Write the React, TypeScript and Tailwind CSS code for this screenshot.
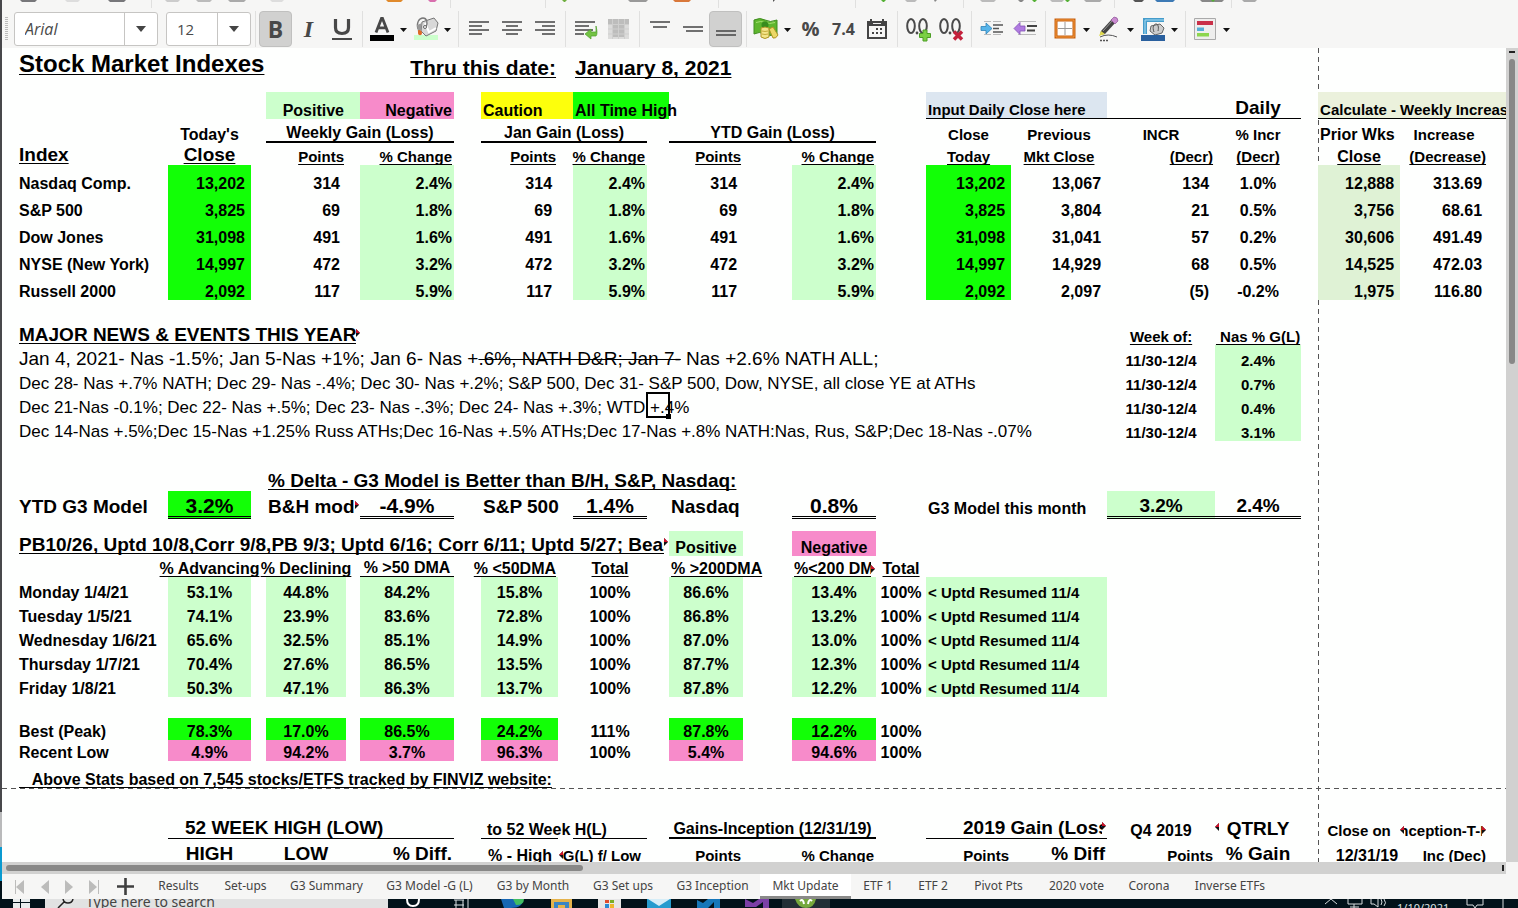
import React, { useState } from "react";
import type { ReactNode } from "react";

/* ---------- Sheet cells ---------- */

const SIZE = {
  15: "text-[15px] leading-[17px]",
  16: "text-[16px] leading-[16px]",
  17: "text-[17px] leading-[18px]",
  19: "text-[19px] leading-[20px]",
  21: "text-[21px] leading-[20px]",
  24: "text-[24px] leading-[28px]",
};

const ALIGN = {
  left: "justify-start pl-[2px]",
  center: "justify-center",
  right: "justify-end pr-[2px]",
  number: "justify-end pr-[6px]",
};

const FILL = {
  none: "",
  mint: "bg-[#ccffcc]",
  green: "bg-[#12ff06]",
  pink: "bg-[#f78bca]",
  yellow: "bg-[#fdff0c]",
  blue: "bg-[#dce6f0]",
  olive: "bg-[#ebf1dc]",
  sage: "bg-[#dff2d5]",
};

const LINE = {
  none: "",
  thin: "border-b border-black",
  thick: "border-b-2 border-black",
  double: "border-b-[3px] border-double border-black",
};

type CellProps = {
  span?: number;
  size?: keyof typeof SIZE;
  align?: keyof typeof ALIGN;
  fill?: keyof typeof FILL;
  line?: keyof typeof LINE;
  u?: boolean;
  plain?: boolean;
  inset?: string;
  children?: ReactNode;
};

function C({ span = 1, size = 16, align = "left", fill = "none", line = "none", u, plain, inset = "", children }: CellProps) {
  return (
    <td colSpan={span} className={`p-0 align-bottom ${FILL[fill]} ${LINE[line]}`}>
      <div className={`flex whitespace-pre ${SIZE[size]} ${ALIGN[align]} ${plain ? "font-normal" : "font-bold"} ${inset}`}>
        {typeof children === "string" && u ? <Under>{children}</Under> : children}
      </div>
    </td>
  );
}

function Under({ children }: { children: ReactNode }) {
  return (
    <span className="underline decoration-1 underline-offset-2 [text-decoration-skip-ink:none]">{children}</span>
  );
}

function Mark({ left }: { left?: boolean }) {
  return (
    <svg width="4" height="8" viewBox="0 0 4 8" className="mt-1 shrink-0" aria-hidden="true">
      <path d={left ? "M4 0v8L0 4z" : "M0 0v8l4-4z"} fill="#111" />
      <path d={left ? "M4 0v4H0z" : "M0 0v4h4z"} fill="#d0102a" />
    </svg>
  );
}

/** Text cut off at the right edge of its cell, with the overflow marker after it. */
function Clipped({ children }: { children: ReactNode }) {
  return (
    <div className="flex min-w-0 flex-1">
      <div className="-mb-[4px] min-w-0 overflow-hidden pb-[4px]">{children}</div>
      <Mark />
    </div>
  );
}

/** Index label column with the sheet's left margin. */
function Label({ children, span = 1, size = 16, u, plain }: CellProps) {
  return (
    <td colSpan={span} className="p-0 pl-[17px] align-bottom">
      <div className={`flex whitespace-pre ${SIZE[size]} ${plain ? "font-normal" : "font-bold"}`}>
        {u ? <Under>{children}</Under> : children}
      </div>
    </td>
  );
}

const COLS = [
  "w-[166px]", "w-[83px]", "w-[15px]", "w-[80px]", "w-[14px]", "w-[94px]", "w-[27px]", "w-[77px]",
  "w-[15px]", "w-[74px]", "w-[22px]", "w-[74px]", "w-[49px]", "w-[84px]", "w-[50px]", "w-[85px]",
  "w-[96px]", "w-[108px]", "w-[86px]", "w-[17px]", "w-[82px]", "w-[88px]", "w-[18px]",
];

const MARKET = [
  ["Nasdaq Comp.", "13,202", "314", "2.4%", "13,067", "134", "1.0%", "12,888", "313.69"],
  ["S&P 500", "3,825", "69", "1.8%", "3,804", "21", "0.5%", "3,756", "68.61"],
  ["Dow Jones", "31,098", "491", "1.6%", "31,041", "57", "0.2%", "30,606", "491.49"],
  ["NYSE (New York)", "14,997", "472", "3.2%", "14,929", "68", "0.5%", "14,525", "472.03"],
  ["Russell 2000", "2,092", "117", "5.9%", "2,097", "(5)", "-0.2%", "1,975", "116.80"],
];

const BREADTH = [
  ["Monday 1/4/21", "53.1%", "44.8%", "84.2%", "15.8%", "100%", "86.6%", "13.4%", "100%"],
  ["Tuesday 1/5/21", "74.1%", "23.9%", "83.6%", "72.8%", "100%", "86.8%", "13.2%", "100%"],
  ["Wednesday 1/6/21", "65.6%", "32.5%", "85.1%", "14.9%", "100%", "87.0%", "13.0%", "100%"],
  ["Thursday 1/7/21", "70.4%", "27.6%", "86.5%", "13.5%", "100%", "87.7%", "12.3%", "100%"],
  ["Friday 1/8/21", "50.3%", "47.1%", "86.3%", "13.7%", "100%", "87.8%", "12.2%", "100%"],
];

const EXTREMES = [
  ["Best (Peak)", "78.3%", "17.0%", "86.5%", "24.2%", "111%", "87.8%", "12.2%", "100%"],
  ["Recent Low", "4.9%", "94.2%", "3.7%", "96.3%", "100%", "5.4%", "94.6%", "100%"],
];

function BreadthCells({ row, fill }: { row: string[]; fill: keyof typeof FILL }) {
  return (
    <>
      <Label>{row[0]}</Label>
      <C align="center" fill={fill}>{row[1]}</C>
      <C />
      <C align="center" fill={fill}>{row[2]}</C>
      <C />
      <C align="center" fill={fill}>{row[3]}</C>
      <C />
      <C align="center" fill={fill}>{row[4]}</C>
      <C />
      <C align="center">{row[5]}</C>
      <C />
      <C align="center" fill={fill}>{row[6]}</C>
      <C />
      <C align="center" fill={fill}>{row[7]}</C>
      <C align="center">{row[8]}</C>
    </>
  );
}

function WeekCells({ value }: { value: string }) {
  return (
    <>
      <C size={15} align="center">11/30-12/4</C>
      <C size={15} align="center" fill="mint">{value}</C>
    </>
  );
}

function Sheet() {
  return (
    <div className="relative min-w-0 flex-1 overflow-hidden bg-[#fefffe]">
      {/* page breaks */}
      <div className="absolute inset-y-0 left-[1316px] w-px bg-[repeating-linear-gradient(to_bottom,#555_0_5px,transparent_5px_9px)]" />
      <div className="absolute inset-x-0 top-[740px] h-px bg-[repeating-linear-gradient(to_right,#555_0_5px,transparent_5px_9px)]" />
      <table className="relative w-[1504px] table-fixed border-separate border-spacing-0 font-['Liberation_Sans',Arial,sans-serif] text-black">
        <colgroup>
          {COLS.map((w, i) => <col key={i} className={w} />)}
        </colgroup>
        <tbody>
          <tr className="h-[30px]">
            <Label span={4} size={24} u>Stock Market Indexes</Label>
            <C span={4} size={21} align="right" u>Thru this date:</C>
            <C />
            <C span={6} size={21} u>January 8, 2021</C>
          </tr>
          <tr className="h-[14px]"><td className="p-0" /></tr>
          <tr className="h-[27px]">
            <C span={3} />
            <C align="right" fill="mint">Positive</C>
            <C fill="mint" />
            <C align="right" fill="pink">Negative</C>
            <C />
            <C span={2} fill="yellow">Caution</C>
            <C span={2} fill="green">All Time High</C>
            <C span={4} />
            <C span={2} size={15} fill="blue" line="thin">Input Daily Close here</C>
            <C line="thin" />
            <C size={19} align="center" line="thin">Daily</C>
            <C />
            <td colSpan={3} className="border-b border-black bg-[#ebf1dc] p-0 align-bottom">
              <div className="overflow-hidden whitespace-pre pl-[2px] text-[15px] leading-[17px] font-bold">Calculate - Weekly Increase</div>
            </td>
          </tr>
          <tr className="h-[24px]">
            <C />
            <C align="center">Today's</C>
            <C />
            <C span={3} align="center" line="thick">Weekly Gain (Loss)</C>
            <C />
            <C span={3} align="center" line="thick">Jan Gain (Loss)</C>
            <C />
            <C span={3} align="center" line="thick">YTD Gain (Loss)</C>
            <C />
            <C size={15} align="center">Close</C>
            <C size={15} align="center">Previous</C>
            <C size={15} align="center">INCR</C>
            <C size={15} align="center">% Incr</C>
            <C />
            <C>Prior Wks</C>
            <C size={15} align="center">Increase</C>
          </tr>
          <tr className="h-[22px]">
            <Label size={19} u>Index</Label>
            <C size={19} align="center" u>Close</C>
            <C />
            <C size={15} align="right" u>Points</C>
            <C />
            <C size={15} align="right" u>% Change</C>
            <C />
            <C size={15} align="right" u>Points</C>
            <C />
            <C size={15} align="right" u>% Change</C>
            <C />
            <C size={15} align="right" u>Points</C>
            <C />
            <C size={15} align="right" u>% Change</C>
            <C />
            <C size={15} align="center" u>Today</C>
            <C size={15} align="center" u>Mkt Close</C>
            <C size={15} align="right" u>(Decr)</C>
            <C size={15} align="center" u>(Decr)</C>
            <C />
            <C align="center" u>Close</C>
            <C size={15} align="right" u>(Decrease)</C>
          </tr>
          {MARKET.map((r) => (
            <tr key={r[0]} className="h-[27px]">
              <Label>{r[0]}</Label>
              <C align="number" fill="green">{r[1]}</C>
              <C />
              <C align="number">{r[2]}</C>
              <C />
              <C align="right" fill="mint">{r[3]}</C>
              <C />
              <C align="number">{r[2]}</C>
              <C />
              <C align="right" fill="mint">{r[3]}</C>
              <C />
              <C align="number">{r[2]}</C>
              <C />
              <C align="right" fill="mint">{r[3]}</C>
              <C />
              <C align="number" fill="green">{r[1]}</C>
              <C align="number">{r[4]}</C>
              <C align="number">{r[5]}</C>
              <C align="center">{r[6]}</C>
              <C />
              <C align="number" fill="sage">{r[7]}</C>
              <C align="number">{r[8]}</C>
            </tr>
          ))}
          <tr className="h-[22px]"><td className="p-0" /></tr>
          <tr className="h-[23px]">
            <td colSpan={5} className="p-0 pl-[17px] align-bottom">
              <div className="flex w-[341px] text-[19px] leading-[20px] font-bold whitespace-pre">
                <Clipped><Under>MAJOR NEWS &amp; EVENTS THIS YEAR</Under></Clipped>
              </div>
            </td>
            <C span={12} />
            <C size={15} align="center" u>Week of:</C>
            <C size={15} align="center" u>{" Nas % G(L)"}</C>
          </tr>
          <tr className="h-[24px]">
            <Label span={17} size={19} plain>
              Jan 4, 2021- Nas -1.5%; Jan 5-Nas +1%; Jan 6- Nas +<s className="decoration-1">.6%, NATH D&amp;R; Jan 7-</s> Nas +2.6% NATH ALL;
            </Label>
            <WeekCells value="2.4%" />
          </tr>
          <tr className="h-[24px]">
            <Label span={17} size={17} plain>
              Dec 28- Nas +.7% NATH; Dec 29- Nas -.4%; Dec 30- Nas +.2%; S&amp;P 500, Dec 31- S&amp;P 500, Dow, NYSE, all close YE at ATHs
            </Label>
            <WeekCells value="0.7%" />
          </tr>
          <tr className="h-[24px]">
            <Label span={10} size={17} plain>
              Dec 21-Nas -0.1%; Dec 22- Nas +.5%; Dec 23- Nas -.3%; Dec 24- Nas +.3%; WTD +.4%
            </Label>
            <td className="relative p-0">
              <div className="absolute -inset-px border-2 border-black" />
              <div className="absolute -right-[2px] -bottom-[2px] size-[5px] bg-black" />
            </td>
            <C span={6} />
            <WeekCells value="0.4%" />
          </tr>
          <tr className="h-[24px]">
            <Label span={17} size={17} plain>
              Dec 14-Nas +.5%;Dec 15-Nas +1.25% Russ ATHs;Dec 16-Nas +.5% ATHs;Dec 17-Nas +.8% NATH:Nas, Rus, S&amp;P;Dec 18-Nas -.07%
            </Label>
            <WeekCells value="3.1%" />
          </tr>
          <tr className="h-[27px]"><td className="p-0" /></tr>
          <tr className="h-[23px]">
            <C span={3} />
            <C span={11} size={19} u>% Delta - G3 Model is Better than B/H, S&amp;P, Nasdaq:</C>
          </tr>
          <tr className="h-[28px]">
            <Label size={19}><span className="pb-[2px]">YTD G3 Model</span></Label>
            <C size={21} align="center" fill="green" line="double">3.2%</C>
            <C />
            <C span={2} size={19} inset="pb-[2px] pr-[1px]"><Clipped>B&amp;H model</Clipped></C>
            <C size={21} align="center" line="double">-4.9%</C>
            <C />
            <C span={2} size={19} inset="pb-[2px]">S&amp;P 500</C>
            <C size={21} align="center" line="double">1.4%</C>
            <C />
            <C size={19} inset="pb-[2px]">Nasdaq</C>
            <C />
            <C size={21} align="center" line="double">0.8%</C>
            <C />
            <C span={2} inset="pb-[2px]">G3 Model this month</C>
            <C size={19} align="center" fill="mint" line="double">3.2%</C>
            <C size={19} align="center" line="double">2.4%</C>
          </tr>
          <tr className="h-[12px]"><td className="p-0" /></tr>
          <tr className="h-[25px]">
            <td colSpan={11} className="p-0 pr-[1px] pl-[17px] align-bottom">
              <div className="flex text-[19px] leading-[22px] font-bold whitespace-pre">
                <Clipped><Under>PB10/26, Uptd 10/8,Corr 9/8,PB 9/3; Uptd 6/16; Corr 6/11; Uptd 5/27; Bear</Under></Clipped>
              </div>
            </td>
            <C align="center" fill="mint">Positive</C>
            <C />
            <C align="center" fill="pink">Negative</C>
          </tr>
          <tr className="h-[21px]">
            <C />
            <C align="center" u>% Advancing</C>
            <C />
            <C align="center" u>% Declining</C>
            <C />
            <C align="center" line="thin">{"% >50 DMA"}</C>
            <C />
            <C align="right" u>{"% <50DMA"}</C>
            <C />
            <C align="center" u>Total</C>
            <C />
            <C span={2} u>{"% >200DMA"}</C>
            <C inset="pr-[1px]"><Clipped><Under>{"%<200 DMA"}</Under></Clipped></C>
            <C align="center" u>Total</C>
          </tr>
          {BREADTH.map((r) => (
            <tr key={r[0]} className="h-[24px]">
              <BreadthCells row={r} fill="mint" />
              <C span={2} size={15} fill="mint">{"< Uptd Resumed 11/4"}</C>
            </tr>
          ))}
          <tr className="h-[21px]"><td className="p-0" /></tr>
          <tr className="h-[22px]"><BreadthCells row={EXTREMES[0]} fill="green" /></tr>
          <tr className="h-[21px]"><BreadthCells row={EXTREMES[1]} fill="pink" /></tr>
          <tr className="h-[27px]">
            <Label span={10} u>{"   Above Stats based on 7,545 stocks/ETFS tracked by FINVIZ website:"}</Label>
          </tr>
          <tr className="h-[26px]"><td className="p-0" /></tr>
          <tr className="h-[25px]">
            <C />
            <C span={5} size={19} line="thin" inset="pl-[17px]">52 WEEK HIGH (LOW)</C>
            <C />
            <C line="thin" inset="pl-[6px]">to 52 Week H(L)</C>
            <C />
            <C line="thin" />
            <C />
            <C span={3} align="center" line="thick">Gains-Inception (12/31/19)</C>
            <C />
            <C span={2} size={19} line="thin" inset="pl-[37px] pr-[1px]"><Clipped>2019 Gain (Loss)</Clipped></C>
            <C align="center">Q4 2019</C>
            <C size={19} align="center"><Mark left /><span className="flex-1 pr-[4px] text-center">QTRLY</span></C>
            <C />
            <C size={15} align="center">Close on</C>
            <C size={15} align="right">
              <Mark left />
              <div className="flex min-w-0 flex-1 justify-center overflow-hidden">Inception-T-D</div>
              <Mark />
            </C>
          </tr>
          <tr className="h-[25px]">
            <C />
            <C size={19} align="center">HIGH</C>
            <C />
            <C size={19} align="center">LOW</C>
            <C />
            <C size={19} align="right">% Diff.</C>
            <C />
            <C align="number">% - High</C>
            <C span={2} size={15} align="number"><Mark left />G(L) f/ Low</C>
            <C />
            <C size={15} align="right">Points</C>
            <C />
            <C size={15} align="right">% Change</C>
            <C />
            <C size={15} align="right">Points</C>
            <C size={19} align="right">% Diff</C>
            <C size={15} align="right">Points</C>
            <C size={19} align="center">% Gain</C>
            <C />
            <C align="right">12/31/19</C>
            <C size={15} align="right">Inc (Dec)</C>
          </tr>
        </tbody>
      </table>
    </div>
  );
}

/* ---------- Toolbar ---------- */

function Tool({ label, pressed, narrow, children }: { label: string; pressed?: boolean; narrow?: boolean; children: ReactNode }) {
  return (
    <button
      type="button"
      aria-label={label}
      aria-pressed={pressed}
      className={`flex h-[36px] shrink-0 items-center justify-center rounded-[4px] ${narrow ? "w-[31px]" : "w-[33px]"} ${pressed ? "border border-[#c0c0bf] bg-[#d1d1d0]" : ""}`}
    >
      {children}
    </button>
  );
}

function Arrow({ label }: { label: string }) {
  return (
    <button type="button" aria-label={label} className="flex h-[36px] w-[13px] shrink-0 items-center justify-center pt-[2px]">
      <svg width="7" height="4" viewBox="0 0 7 4" aria-hidden="true"><path d="M0 0h7L3.500 4z" fill="#111" /></svg>
    </button>
  );
}

function Sep() {
  return <div className="flex w-[8px] shrink-0 justify-center"><div className="h-[36px] w-px bg-[#e0e0df]" /></div>;
}

function Icon({ children }: { children: ReactNode }) {
  return <svg width="26" height="26" viewBox="0 0 26 26" fill="none" aria-hidden="true">{children}</svg>;
}

function Lines({ d }: { d: string }) {
  return <Icon><path d={d} stroke="#444" strokeWidth="1.700" /></Icon>;
}

const GLYPH = "font-['Open_Sans','Noto_Sans',sans-serif] font-bold text-[#484848]";

function Combo({ label, value, italic, wide }: { label: string; value: string; italic?: boolean; wide?: boolean }) {
  const [text, setText] = useState(value);
  return (
    <div className={`flex h-[34px] shrink-0 rounded-[3px] border border-[#c6c5c3] bg-white ${wide ? "w-[144px]" : "w-[85px]"}`}>
      <input
        aria-label={label}
        value={text}
        onChange={(e) => setText(e.target.value)}
        className={`min-w-0 flex-1 px-[10px] font-['Open_Sans','Noto_Sans',sans-serif] text-[#4a4a4a] outline-none ${italic ? "text-[16px] italic" : "text-[15px]"}`}
      />
      <button type="button" aria-label={`${label} list`} className="flex w-[33px] items-center justify-center border-l border-[#c6c5c3]">
        <svg width="10" height="6" viewBox="0 0 10 6" aria-hidden="true"><path d="M0 0h10L5 6z" fill="#444" /></svg>
      </button>
    </div>
  );
}

function UpperToolbarEdge() {
  const bits: [number, number, string][] = [
    [20, 17, "#77777a"], [65, 15, "#ddd"], [108, 18, "#77777a"], [165, 15, "#ccc"], [196, 16, "#bbb"], [228, 18, "#aaa"],
    [270, 14, "#ddd"], [386, 17, "#e08a2c"], [428, 9, "#d86fae"], [562, 5, "#6fae3f"], [628, 20, "#999"],
    [673, 18, "#d9783a"], [773, 2, "#555"], [881, 5, "#54b035"], [905, 12, "#bbb"], [934, 3, "#888"], [980, 16, "#bbb"],
    [1018, 6, "#888"], [1032, 5, "#54b035"], [1050, 14, "#bbb"], [1065, 5, "#54b035"], [1084, 18, "#aaa"],
    [1133, 11, "#555"], [1155, 20, "#3d7ab5"], [1200, 24, "#888"], [1211, 4, "#54b035"], [1242, 15, "#aaa"],
  ];
  return (
    <svg width="100%" height="10" aria-hidden="true" className="block">
      {bits.map(([x, w, c]) => <path key={x} d={`M${x - 2} 0h${w}l-2 2h-${Math.max(w - 4, 0)}z`} fill={c} />)}
      {[149, 448, 543, 716, 853, 961, 1112, 1229].map((x) => <path key={x} d={`M${x + 0.5} 0v8`} stroke="#e0e0df" />)}
    </svg>
  );
}

function Toolbar() {
  return (
    <header className="h-[48px] shrink-0 overflow-hidden bg-[#f6f6f5]">
      <UpperToolbarEdge />
      <div className="flex h-[38px] items-center">
        <div className="mr-[6px] ml-[3px] h-[24px] w-[3px] bg-[repeating-linear-gradient(to_bottom,#bbb_0_1px,transparent_1px_2px)]" />
        <Combo label="Font name" value="Arial" italic wide />
        <div className="w-[8px]" />
        <Combo label="Font size" value="12" />
        <Sep />
        <Tool label="Bold" pressed>
          <span className={`${GLYPH} text-[23px] leading-none`}>B</span>
        </Tool>
        <Tool label="Italic"><span className="font-['Liberation_Serif',serif] text-[24px] leading-none font-bold text-[#484848] italic">I</span></Tool>
        <Tool label="Underline">
          <Icon>
            <path d="M6.500 3v8.500q0 6 6.500 6t6.500-6V3" stroke="#484848" strokeWidth="3.200" />
            <path d="M3 23h20" stroke="#484848" strokeWidth="2" />
          </Icon>
        </Tool>
        <Sep />
        <Tool label="Font color" narrow>
          <Icon>
            <path d="M7 16.500 12.500 2.500h1L19 16.500M9 11.800h8" stroke="#484848" strokeWidth="2.800" />
            <path d="M1 19h24v6H1z" fill="#000" />
          </Icon>
        </Tool>
        <Arrow label="Font color list" />
        <Tool label="Highlighting" narrow>
          <Icon>
            <path d="M1 19h24v5H1z" fill="#ccffcc" />
            <path d="m9 6 12-4 4 5-2 8-10 5-5-5z" fill="#d8d8d8" stroke="#777" />
            <path d="m12 7 4 9 7-4" stroke="#fff" strokeWidth="2" />
            <path d="M5 13C3 7 6 2 10 2s5 5 3 9" stroke="#777" strokeWidth="1.300" />
            <circle cx="12" cy="11" r="1.500" fill="#fff" stroke="#666" />
            <path d="M4 9 9 7l-1 7-3 2z" fill="#999" />
            <path d="M5 15c0-2 4-1 4 2s-4 3-4 0z" fill="#dd6a25" />
          </Icon>
        </Tool>
        <Arrow label="Highlighting list" />
        <Sep />
        <Tool label="Align left"><Lines d="M3 6h20M3 10h13M3 14h20M3 18h13" /></Tool>
        <Tool label="Align center"><Lines d="M3 6h20M7 10h12M3 14h20M7 18h12" /></Tool>
        <Tool label="Align right"><Lines d="M3 6h20M10 10h13M3 14h20M10 18h13" /></Tool>
        <Sep />
        <Tool label="Wrap text">
          <Icon>
            <path d="M2 6h20M2 10h14M2 14h18M2 18h9" stroke="#444" strokeWidth="1.700" />
            <path d="M23 10v6h-5v-3l-6 5 6 5v-3h5q2-2 0-10z" fill="#73c344" stroke="#4f9f2d" strokeWidth=".7" />
          </Icon>
        </Tool>
        <Tool label="Merge cells">
          <Icon>
            <path d="M2 3h21v20H2z" fill="#dcdcdb" />
            <path d="M2 3h21v5H2zM6 8h12v13H6z" fill="#bdbdbc" />
            <path d="M2 8.500h21M2 13h21M2 18h21M6.500 3v20M12.500 3v20M18.500 3v20" stroke="#cfcfce" />
          </Icon>
        </Tool>
        <Sep />
        <Tool label="Align top"><Lines d="M3 6h20M6 11h14" /></Tool>
        <Tool label="Center vertically"><Lines d="M3 11h20M6 15h17" /></Tool>
        <Tool label="Align bottom" pressed><Lines d="M3 19h20M3 15h20" /></Tool>
        <Sep />
        <Tool label="Format as currency" narrow>
          <Icon>
            <path d="M1 4q6-3 11 0t12 0v14q-6 3-12 0t-11 0z" fill="#5eb62d" stroke="#3f8d1f" />
            <path d="M3 6.500q5-2 9 0t10 0" stroke="#a4e070" />
            <circle cx="12" cy="9" r="3.500" fill="#378c1e" />
            <path d="M8 12q4-2 8 0v9q-4 3-8 0z" fill="#f3e58a" stroke="#ad9426" />
            <path d="m16 13 4-2 5 8q-2 4-5 3z" fill="#ecd867" stroke="#ad9426" />
            <path d="M9 15q3 1 6 0M9 18q3 1 6 0" stroke="#c6ac3d" />
          </Icon>
        </Tool>
        <Arrow label="Currency list" />
        <Tool label="Format as percent"><span className={`${GLYPH} text-[20px] leading-none`}>%</span></Tool>
        <Tool label="Format as number"><span className={`${GLYPH} text-[16px] leading-none`}>7.4</span></Tool>
        <Tool label="Format as date">
          <Icon>
            <path d="M4 6h18v16H4z" stroke="#444" strokeWidth="2" />
            <path d="M3 5h20v5H3z" fill="#444" />
            <path d="M7 3v4M19 3v4" stroke="#444" strokeWidth="2" />
            <path d="M9 7.500h8" stroke="#eee" />
            <path d="M12 13h2m2 0h2M8 17h2m2 0h2m2 0h2" stroke="#444" strokeWidth="2" />
          </Icon>
        </Tool>
        <Sep />
        <Tool label="Add decimal place">
          <Icon>
            <ellipse cx="6" cy="10" rx="3.800" ry="7" stroke="#4a4a4a" strokeWidth="2" />
            <ellipse cx="18" cy="10" rx="3.800" ry="7" stroke="#4a4a4a" strokeWidth="2" />
            <circle cx="12" cy="17" r="1.400" fill="#4a4a4a" />
            <path d="M18 14h4v3.500h3.500v4H22V25h-4v-3.500h-3.500v-4H18z" fill="#7bd044" stroke="#4c9e25" />
          </Icon>
        </Tool>
        <Tool label="Delete decimal place">
          <Icon>
            <ellipse cx="6" cy="10" rx="3.800" ry="7" stroke="#4a4a4a" strokeWidth="2" />
            <ellipse cx="18" cy="10" rx="3.800" ry="7" stroke="#4a4a4a" strokeWidth="2" />
            <circle cx="12" cy="17" r="1.400" fill="#4a4a4a" />
            <path d="m16 15.500 8 8m0-8-8 8" stroke="#c3203b" strokeWidth="3.500" />
          </Icon>
        </Tool>
        <Sep />
        <Tool label="Increase indent">
          <Icon>
            <path d="M5 5.500h7M14 5.500h8M5 18.500h7M14 18.500h8" stroke="#bbb" />
            <path d="M14 9h10M14 12.500h6M14 16h10" stroke="#555" strokeWidth="1.600" />
            <path d="M2 10.500h5V7l6 5.500L7 18v-3.500H2z" fill="#57b5ea" stroke="#2f83b8" strokeWidth=".8" />
          </Icon>
        </Tool>
        <Tool label="Decrease indent">
          <Icon>
            <path d="M6 5.500h18M6 18.500h18" stroke="#bbb" />
            <path d="M15 10h10M15 14.500h8" stroke="#444" strokeWidth="2" />
            <path d="M13 10H8V6.500L2 12.500l6 6V15h5z" fill="#b07be0" stroke="#8450b8" strokeWidth=".8" />
          </Icon>
        </Tool>
        <Sep />
        <Tool label="Borders" narrow>
          <Icon>
            <path d="M4 4h18v17H4z" fill="#fff" stroke="#c75f0c" strokeWidth="3" />
            <path d="M4 4h18v17H4z" stroke="#f39a3e" />
            <path d="M13 6v13M6 12.500h14" stroke="#999" />
          </Icon>
        </Tool>
        <Arrow label="Borders list" />
        <Tool label="Border style" narrow>
          <Icon>
            <path d="m5 15 11-12 4 3L9 18l-5 1z" fill="#444" />
            <path d="m7 15 10-11" stroke="#999" />
            <path d="m15 4 3-3q4 0 4 4l-3 3z" fill="#c98bd0" stroke="#8f5798" strokeWidth=".7" />
            <path d="m5 15 4 3-6 2z" fill="#dfd94c" />
            <path d="M4 21q8-4 17 0" stroke="#555" />
            <path d="M4 24.500h9" stroke="#555" strokeWidth="1.500" strokeDasharray="2 1" />
          </Icon>
        </Tool>
        <Arrow label="Border style list" />
        <Tool label="Border color" narrow>
          <Icon>
            <path d="M5 18V4h19" stroke="#459ccb" strokeWidth="4" />
            <path d="M5 18V4h19" stroke="#a8dcf3" />
            <path d="m11 10 9-2 4 4-2 5-7 2-5-4z" fill="#ccc" stroke="#666" />
            <path d="M14 16c-2-5 0-8 2-8s3 3 2 7" stroke="#555" />
            <path d="M1 19h24v6H1z" fill="#2a609e" />
          </Icon>
        </Tool>
        <Arrow label="Border color list" />
        <Sep />
        <Tool label="Conditional formatting" narrow>
          <Icon>
            <path d="M2.500 2.500h21v21h-21z" fill="#eeeeed" stroke="#aaa" />
            <path d="M5 5h16v4H5z" fill="#c93048" />
            <path d="M5 11.500h7v3.500H5z" fill="#55aed6" />
            <path d="M5 17h12v3.500H5z" fill="#8cd64e" />
          </Icon>
        </Tool>
        <Arrow label="Conditional formatting list" />
      </div>
    </header>
  );
}

/* ---------- Sheet tabs ---------- */

const TABS: [string, string][] = [
  ["Results", "w-[67px]"], ["Set-ups", "w-[67px]"], ["G3 Summary", "w-[95px]"], ["G3 Model -G (L)", "w-[111px]"],
  ["G3 by Month", "w-[96px]"], ["G3 Set ups", "w-[84px]"], ["G3 Inception", "w-[95px]"], ["Mkt Update", "w-[91px]"],
  ["ETF 1", "w-[54px]"], ["ETF 2", "w-[56px]"], ["Pivot Pts", "w-[75px]"], ["2020 vote", "w-[81px]"],
  ["Corona", "w-[64px]"], ["Inverse ETFs", "w-[98px]"],
];

function NavArrow({ label, d }: { label: string; d: string }) {
  return (
    <button type="button" aria-label={label} className="flex h-full w-[24px] items-center justify-center">
      <svg width="12" height="16" viewBox="0 0 12 16" aria-hidden="true"><path d={d} fill="#bcbcbb" /></svg>
    </button>
  );
}

function SheetTabs() {
  const [active, setActive] = useState("Mkt Update");
  return (
    <nav className="flex h-[25px] shrink-0 bg-[#f6f6f5] pl-[7px] font-['Noto_Sans','Open_Sans',sans-serif] text-[12px] text-[#444]">
      <NavArrow label="First sheet" d="M0 1h1v14H0zM9 1v14L1 8z" />
      <NavArrow label="Previous sheet" d="M10 1v14L2 8z" />
      <NavArrow label="Next sheet" d="M2 1v14l8-7z" />
      <NavArrow label="Last sheet" d="M11 1h1v14h-1zM2 1v14l8-7z" />
      <button type="button" aria-label="Add sheet" className="flex w-[40px] items-center justify-center">
        <svg width="17" height="17" viewBox="0 0 17 17" aria-hidden="true"><path d="M8.500 0v17M0 8.500h17" stroke="#3f3f3f" strokeWidth="2.600" /></svg>
      </button>
      {TABS.map(([name, w]) => (
        <button
          key={name}
          type="button"
          onClick={() => setActive(name)}
          aria-current={active === name}
          className={`${w} shrink-0 border-b-[3px] pt-[2px] text-center leading-[20px] whitespace-nowrap ${active === name ? "border-[#8a8a89] bg-white" : "border-transparent"}`}
        >
          {name}
        </button>
      ))}
    </nav>
  );
}

/* ---------- Taskbar behind the window ---------- */

function Taskbar() {
  return (
    <footer className="relative flex h-[9px] shrink-0 overflow-hidden bg-[#02121a]">
      <svg width="45" height="9" aria-hidden="true" className="shrink-0"><path d="M13 0h7v3h-7zM21 0h9v3h-9zM13 4h7v5h-7zM21 4h9v5h-9z" fill="#e8eced" /></svg>
      <div className="flex w-[343px] shrink-0 items-start gap-[12px] bg-[#e1e2e2] pl-[12px]">
        <svg width="17" height="9" aria-hidden="true"><path d="M1 9 7 3M6 0q1 4 5 4t5-4" stroke="#222" strokeWidth="1.500" fill="none" /></svg>
        <span className="-mt-[6px] font-['Noto_Sans',sans-serif] text-[14px] leading-[18px] whitespace-nowrap text-[#444]">Type here to search</span>
      </div>
      <svg width="460" height="9" viewBox="388 0 460 9" aria-hidden="true" className="shrink-0">
        <path d="M407 0q0 7 6 7t6-7" stroke="#fff" strokeWidth="2" fill="none" />
        <path d="M454 1h10M454 6h10M456 1v8M463 1v8M468 0v9" stroke="#dce3e6" fill="none" />
        <path d="M501 0h22q0 9-12 9h-7z" fill="#1767b3" /><path d="M513 0h11q0 6-8 6z" fill="#42bd62" />
        <path d="M551 0h21v9h-21z" fill="#e5b34c" /><path d="M554 3h15v6h-15z" fill="#3b85c5" /><path d="M558 6h7v3h-7z" fill="#e5b34c" />
        <path d="M598 0h23v9h-23z" fill="#e7e7e7" />
        <path d="M605 1h4v3h-4z" fill="#e04b2e" /><path d="M610 1h4v3h-4z" fill="#79ae25" /><path d="M605 5h4v4h-4z" fill="#2b89d4" /><path d="M610 5h4v4h-4z" fill="#eeb62c" />
        <path d="M647 0h24v9h-24z" fill="#259bce" /><path d="M648 0h22l-11 7z" fill="#d5edf7" />
        <path d="M697 1l6 3 5-4h12v9h-6V3l-6 6h-11z" fill="#1677b9" />
        <path d="M745 0l8 4 6-4h10v9h-6V3l-7 5h-11z" fill="#7b3fa6" />
        <path d="M782 0h48v9h-48z" fill="#222f36" /><path d="M795 0h21q-2 9-10 9t-11-9z" fill="#76a83c" /><path d="M800 2q3-3 4 3m8-3q-3-3-4 3" stroke="#fff" strokeWidth="2" fill="none" />
      </svg>
      <div className="flex-1" />
      <svg width="70" height="9" viewBox="1324 0 70 9" aria-hidden="true" className="shrink-0">
        <path d="m1325 5 6-5 6 5M1348 0v5h14V0M1354 5v4M1350 8h9M1371 0v5h3l4 3V0M1381 0q2 3 0 6M1384 0q3 4 0 7" stroke="#d6dbdd" fill="none" />
      </svg>
      <span className="mt-[2px] w-[70px] pl-[3px] font-['Noto_Sans',sans-serif] text-[11px] leading-[14px] text-[#dde2e4]">1/10/2021</span>
      <svg width="54" height="9" viewBox="1464 0 54 9" aria-hidden="true" className="shrink-0">
        <path d="M1467 0v6h6l2 3 2-3h6V0M1503 0v9" stroke="#d6dbdd" fill="none" />
      </svg>
    </footer>
  );
}

export default function App() {
  return (
    <div className="flex h-screen flex-col overflow-hidden bg-[#02121a]">
      <div className="flex min-h-0 flex-1">
        <div className="flex w-[2px] shrink-0 flex-col">
          <div className="flex-1 bg-[#48484b]" />
          <div className="h-[35px] bg-[#b9babb]" />
          <div className="h-[34px] bg-[#0a9ad0]" />
          <div className="h-[18px] bg-[#02121a]" />
        </div>
        <main className="flex min-w-0 flex-1 flex-col">
          <Toolbar />
          <div className="flex min-h-0 flex-1">
            <Sheet />
            <div className="flex w-[12px] shrink-0 flex-col items-center bg-[#d1d1d0] pt-[3px]">
              <div className="h-[2px] w-[6px] bg-[#222]" />
              <div className="mt-[6px] h-[305px] w-[6px] rounded-full bg-[#888887]" />
            </div>
          </div>
          <div className="flex h-[12px] shrink-0 bg-[#f6f6f5] pr-[12px]">
            <div className="flex flex-1 items-center justify-between bg-[#d1d1d0] pr-[2px] pl-[4px]">
              <div className="h-[6px] w-[577px] rounded-full bg-[#888887]" />
              <div className="h-[6px] w-[2px] bg-[#222]" />
            </div>
          </div>
          <SheetTabs />
        </main>
      </div>
      <Taskbar />
    </div>
  );
}
